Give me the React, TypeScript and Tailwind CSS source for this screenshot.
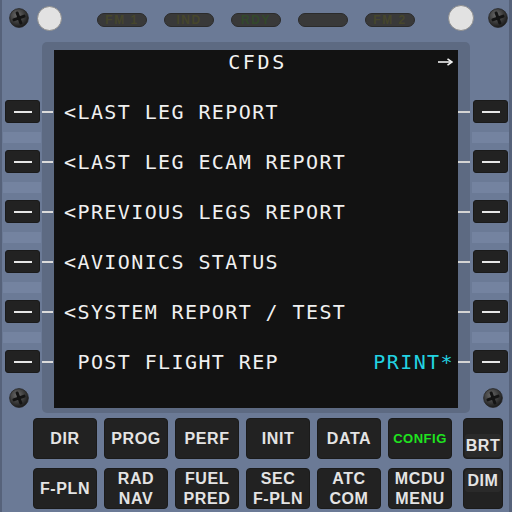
import React from "react";

function Screw() {
  return (
    <svg width="20" height="20" viewBox="0 0 20 20">
      <defs>
        <radialGradient id="sg" cx="40%" cy="35%" r="65%">
          <stop offset="0" stopColor="#6a6a6a" />
          <stop offset="1" stopColor="#1c1c1c" />
        </radialGradient>
      </defs>
      <circle cx="10" cy="10" r="9.4" fill="url(#sg)" stroke="#262626" strokeWidth="0.8" />
      <g transform="rotate(-20 10 10)" fill="#141414">
        <rect x="8.5" y="3.2" width="3" height="13.6" rx="1.2" />
        <rect x="3.2" y="8.5" width="13.6" height="3" rx="1.2" />
      </g>
    </svg>
  );
}

function Ann({ label, color }: { label: string; color: string }) {
  return (
    <div
      className="w-[50px] h-[14px] rounded-full bg-[#393939] border border-[#2b2b2b] flex items-center justify-center text-[12px] font-bold tracking-[1.5px] leading-none"
      style={{ color, fontFamily: '"Liberation Sans", Arial, sans-serif' }}
    >
      {label}
    </div>
  );
}

function Lsk() {
  return (
    <div className="w-[35px] h-[23px] rounded-[3px] bg-[#222222] border border-[#1a1a1a] flex items-center justify-center">
      <div className="w-[18px] h-[2px] bg-[#e6e6e6]" />
    </div>
  );
}

const rows: { l: string; r?: string }[] = [
  { l: "<LAST LEG REPORT" },
  { l: "<LAST LEG ECAM REPORT" },
  { l: "<PREVIOUS LEGS REPORT" },
  { l: "<AVIONICS STATUS" },
  { l: "<SYSTEM REPORT / TEST" },
  { l: "\u00a0POST FLIGHT REP", r: "PRINT*" },
];

function Key({ lines, green }: { lines: string[]; green?: boolean }) {
  return (
    <div className="w-[64px] h-[41px] rounded-[4px] bg-[#222222] border border-[#1b1b1b] flex flex-col items-center justify-center">
      {lines.map((t) => (
        <div
          key={t}
          className={
            green
              ? "text-[13px] leading-[20px] font-bold tracking-[0.5px] text-[#1fe31f]"
              : "text-[16px] leading-[20px] font-bold tracking-[0.6px] text-[#e4e4e4]"
          }
        >
          {t}
        </div>
      ))}
    </div>
  );
}

export default function App() {
  const mono = { fontFamily: '"DejaVu Sans Mono", "Liberation Mono", monospace' };
  return (
    <div
      className="w-[512px] h-[512px] bg-[#6b7a96] border-l-[2px] border-r-[3px] border-[#56627a] flex flex-col overflow-hidden"
      style={{ fontFamily: '"Liberation Sans", Arial, sans-serif' }}
    >
      {/* top row */}
      <div className="h-[36px] flex items-center pl-[7px]">
        <Screw />
        <div className="ml-[8px] w-[25px] h-[25px] rounded-full bg-[#e2e2e2] border border-[#8d8d8d]" />
        <div className="ml-[35px] flex gap-[17px] mt-[3px]">
          <Ann label="FM 1" color="#46462c" />
          <Ann label="IND" color="#46462c" />
          <Ann label="RDY" color="#33492b" />
          <Ann label="" color="#46462c" />
          <Ann label="FM 2" color="#46462c" />
        </div>
        <div className="ml-[33px] w-[26px] h-[26px] rounded-full bg-[#e2e2e2] border border-[#8d8d8d]" />
        <div className="ml-[14px]">
          <Screw />
        </div>
      </div>

      {/* middle */}
      <div className="mt-[6px] h-[371px] flex">
        {/* left LSK column */}
        <div className="w-[40px] flex flex-col items-start pt-[58px]">
          {rows.map((_, i) => (
            <React.Fragment key={i}>
              <div className="ml-[3px]">
                <Lsk />
              </div>
              {i < 5 && <div className="mt-[9px] mb-[7px] ml-[1px] w-[38px] h-[11px] bg-[#7483a0]" />}
            </React.Fragment>
          ))}
          <div className="mt-[15px] ml-[7px]">
            <Screw />
          </div>
        </div>

        {/* bezel */}
        <div className="w-[428px] h-[371px] bg-[#5d6a82] rounded-[5px] flex pt-[8px] pb-[5px]">
          <div className="w-[12px] flex flex-col pt-[61px] gap-[48px]">
            {rows.map((_, i) => (
              <div key={i} className="w-[11px] h-[2px] bg-[#dcdcdc]" />
            ))}
          </div>
          <div className="w-[404px] h-[358px] bg-[#121212] flex flex-col" style={mono}>
            <div className="h-[24px] flex items-center relative">
              <div className="flex-1 text-center text-[20px] leading-none tracking-[2.6px] text-[#f2f2f2] pl-[3px]">
                CFDS
              </div>
              <svg className="absolute right-[5px] top-[8px]" width="15" height="8" viewBox="0 0 15 8">
                <path d="M0 4 H13.5" stroke="#f2f2f2" strokeWidth="1.6" />
                <path d="M9.5 0.8 L14 4 L9.5 7.2" stroke="#f2f2f2" strokeWidth="1.6" fill="none" />
              </svg>
            </div>
            <div className="mt-[13px] flex flex-col">
              {rows.map((r, i) => (
                <div key={i} className="h-[50px] flex items-center justify-between pl-[10px] pr-[4px]">
                  <span className="text-[20px] leading-none tracking-[1.4px] text-[#f0f0f0] whitespace-pre">{r.l}</span>
                  {r.r && (
                    <span className="text-[20px] leading-none tracking-[1.4px] text-[#22d3e2]">{r.r}</span>
                  )}
                </div>
              ))}
            </div>
          </div>
          <div className="w-[12px] flex flex-col items-end pt-[61px] gap-[48px]">
            {rows.map((_, i) => (
              <div key={i} className="w-[12px] h-[2px] bg-[#d4d4d4]" />
            ))}
          </div>
        </div>

        {/* right LSK column */}
        <div className="w-[39px] flex flex-col items-start pt-[58px]">
          {rows.map((_, i) => (
            <React.Fragment key={i}>
              <div className="ml-[3px]">
                <Lsk />
              </div>
              {i < 5 && <div className="mt-[9px] mb-[7px] ml-[2px] w-[37px] h-[11px] bg-[#7483a0]" />}
            </React.Fragment>
          ))}
          <div className="mt-[15px] ml-[13px]">
            <Screw />
          </div>
        </div>
      </div>

      {/* keys */}
      <div className="mt-[5px] flex pl-[31px]">
        <div className="flex gap-[7px]">
          <Key lines={["DIR"]} />
          <Key lines={["PROG"]} />
          <Key lines={["PERF"]} />
          <Key lines={["INIT"]} />
          <Key lines={["DATA"]} />
          <Key lines={["CONFIG"]} green />
        </div>
        <div className="ml-[11px] w-[40px] h-[41px] rounded-[4px] bg-[#222222] border border-[#1b1b1b] flex flex-col justify-end p-[1px]">
          <div className="h-[23px] rounded-[3px] bg-[#2a2a2a] flex items-center justify-center text-[16px] font-bold tracking-[0.6px] text-[#e4e4e4] leading-none">
            BRT
          </div>
        </div>
      </div>
      <div className="mt-[9px] flex pl-[31px]">
        <div className="flex gap-[7px]">
          <Key lines={["F-PLN"]} />
          <Key lines={["RAD", "NAV"]} />
          <Key lines={["FUEL", "PRED"]} />
          <Key lines={["SEC", "F-PLN"]} />
          <Key lines={["ATC", "COM"]} />
          <Key lines={["MCDU", "MENU"]} />
        </div>
        <div className="ml-[11px] w-[40px] h-[41px] rounded-[4px] bg-[#222222] border border-[#1b1b1b] flex flex-col justify-start p-[1px]">
          <div className="h-[22px] rounded-[3px] bg-[#2a2a2a] flex items-center justify-center text-[16px] font-bold tracking-[0.6px] text-[#e4e4e4] leading-none">
            DIM
          </div>
        </div>
      </div>
    </div>
  );
}
